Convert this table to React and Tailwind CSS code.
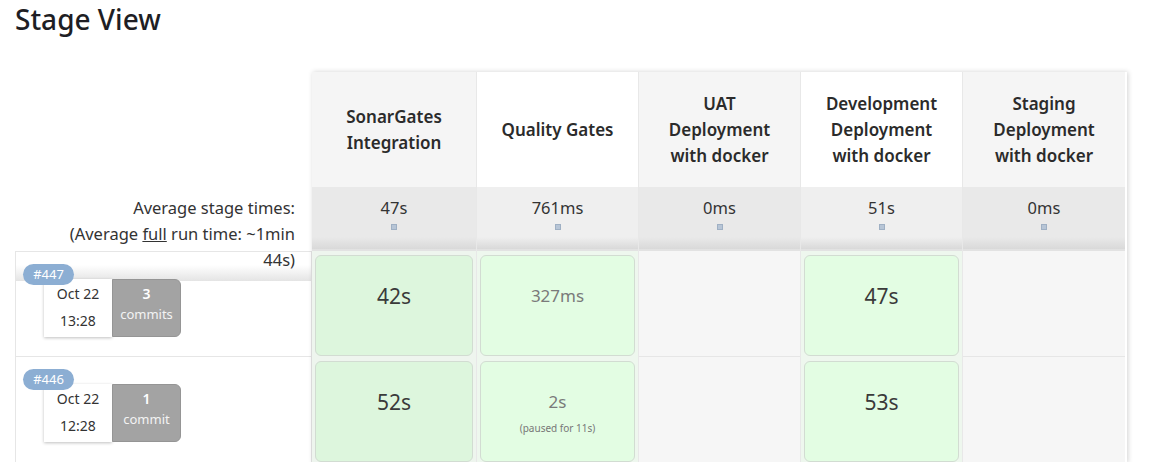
import React from 'react';

const stages = [
  {
    name: ['SonarGates', 'Integration'],
    headBg: 'bg-[#f5f5f5]',
    avg: '47s',
    avgBg: 'bg-[#e9e9e9]',
    bodyBg: 'bg-[#eef5ee]',
    tone: 'dark',
    cells: [
      { text: '42s', kind: 'dark' },
      { text: '52s', kind: 'dark' },
    ],
  },
  {
    name: ['Quality Gates'],
    headBg: 'bg-white',
    avg: '761ms',
    avgBg: 'bg-[#efefef]',
    bodyBg: 'bg-[#eef7ee]',
    tone: 'light',
    cells: [
      { text: '327ms', kind: 'light' },
      { text: '2s', kind: 'light', note: '(paused for 11s)' },
    ],
  },
  {
    name: ['UAT', 'Deployment', 'with docker'],
    headBg: 'bg-[#f5f5f5]',
    avg: '0ms',
    avgBg: 'bg-[#e9e9e9]',
    bodyBg: 'bg-[#f6f6f6]',
    cells: [null, null],
  },
  {
    name: ['Development', 'Deployment', 'with docker'],
    headBg: 'bg-white',
    avg: '51s',
    avgBg: 'bg-[#efefef]',
    bodyBg: 'bg-[#eef7ee]',
    tone: 'light',
    cells: [
      { text: '47s', kind: 'dark' },
      { text: '53s', kind: 'dark' },
    ],
  },
  {
    name: ['Staging', 'Deployment', 'with docker'],
    headBg: 'bg-[#f5f5f5]',
    avg: '0ms',
    avgBg: 'bg-[#e9e9e9]',
    bodyBg: 'bg-[#f6f6f6]',
    cells: [null, null],
  },
];

const builds = [
  { id: '#447', date: 'Oct 22', time: '13:28', commits: '3', label: 'commits', top: true },
  { id: '#446', date: 'Oct 22', time: '12:28', commits: '1', label: 'commit' },
];

function StageCell({ cell, tone }) {
  if (!cell) {
    return <div className="h-[106px] border-b border-[#e6e6e6]" />;
  }
  const bg = tone === 'light' ? 'bg-[#e3fde3]' : 'bg-[#ddf6dd]';
  return (
    <div className="h-[106px] px-[3px] pt-[4px] pb-[1px]">
      <div className={`h-full rounded-[6px] border border-[#d2dcd2] ${bg} pt-[27px] text-center`}>
        {cell.kind === 'dark' ? (
          <div className="text-[21px] leading-[26px] text-[#3a3a3a]">{cell.text}</div>
        ) : (
          <div className="text-[17px] leading-[26px] text-[#7a7a7a]">{cell.text}</div>
        )}
        {cell.note && <div className="mt-[6px] text-[10px] leading-[14px] text-[#777]">{cell.note}</div>}
      </div>
    </div>
  );
}

function BuildRow({ b }) {
  const topBand = b.top
    ? 'bg-[linear-gradient(to_bottom,#ffffff_13px,#e4e4e4_29px,#ffffff_29px)]'
    : 'bg-white';
  return (
    <div className={`h-[106px] border border-[#e6e6e6] ${b.top ? '' : 'border-t-0'} ${topBand} pl-[7px] pt-[9px]`}>
      <div className="relative z-10 inline-flex h-[21px] w-[51px] items-center justify-center rounded-full bg-[#8caed3] text-[13px] text-white">
        {b.id}
      </div>
      <div className="-mt-[6px] ml-[21px] flex h-[58px] w-[137px]">
        <div className="flex w-[68px] flex-col items-center bg-white pt-[5px] text-[14px] leading-[20px] text-[#333] shadow-[0_1px_3px_rgba(0,0,0,0.25)]">
          <div>{b.date}</div>
          <div className="mt-[7px]">{b.time}</div>
        </div>
        <div className="flex w-[69px] flex-col items-center rounded-r-[6px] border border-[#959595] bg-[#a3a3a3] pt-[4px] text-white">
          <div className="text-[14px] font-semibold leading-[20px]">{b.commits}</div>
          <div className="text-[13px] leading-[20px] text-[#f3f3f3]">{b.label}</div>
        </div>
      </div>
    </div>
  );
}

export default function App() {
  return (
    <div className="h-[462px] w-[1153px] overflow-hidden bg-white text-[#333]" style={{ fontFamily: '"Noto Sans", "Open Sans", sans-serif' }}>
      <h2 className="pl-[15px] pt-[1px] text-[28px] font-medium leading-[36px] text-[#1e1e24]">Stage View</h2>

      <div className="mt-[35px] flex pl-[15px]">
        {/* left: labels and builds */}
        <div className="w-[297px] shrink-0">
          <div className="h-[115px]" />
          <div className="relative z-10 h-[64px] pr-[17px] pt-[8px] text-right text-[16.5px] leading-[26px] text-[#333]">
            Average stage times:
            <br />
            (Average <span className="underline">full</span> run time: ~1min
            <br />
            44s)
          </div>
          {builds.map((b) => (
            <BuildRow key={b.id} b={b} />
          ))}
        </div>

        {/* right: stage table */}
        <div className="flex w-[815px] shrink-0 shadow-[1px_0_5px_rgba(0,0,0,0.18)]">
          {stages.map((s, i) => (
            <div
              key={i}
              className={`flex flex-col ${i === 0 ? 'w-[165px]' : 'w-[162px]'} ${i < 4 ? 'border-r border-[#e8e8e8]' : ''} ${s.bodyBg}`}
            >
              <div className={`flex h-[115px] flex-col items-center justify-center text-center text-[17px] font-semibold leading-[26px] text-[#2b2b2b] ${s.headBg}`}>
                {s.name.map((l) => (
                  <div key={l}>{l}</div>
                ))}
              </div>
              <div className={`flex h-[64px] flex-col ${s.avgBg}`}>
                <div className="flex flex-1 flex-col items-center pt-[10px]">
                  <div className="text-[16.5px] leading-[22px] text-[#333]">{s.avg}</div>
                  <div className="mt-[5px] h-[6px] w-[6px] border border-[#9fb0c4] bg-[#b7c5d6]" />
                </div>
                <div className="h-[12px] bg-linear-to-b from-transparent to-[#d9d9d9]" />
                <div className="h-[2px] bg-[#e2e2e2]" />
              </div>
              {s.cells.map((c, j) => (
                <StageCell key={j} cell={c} tone={s.tone} />
              ))}
            </div>
          ))}
        </div>
      </div>
    </div>
  );
}
